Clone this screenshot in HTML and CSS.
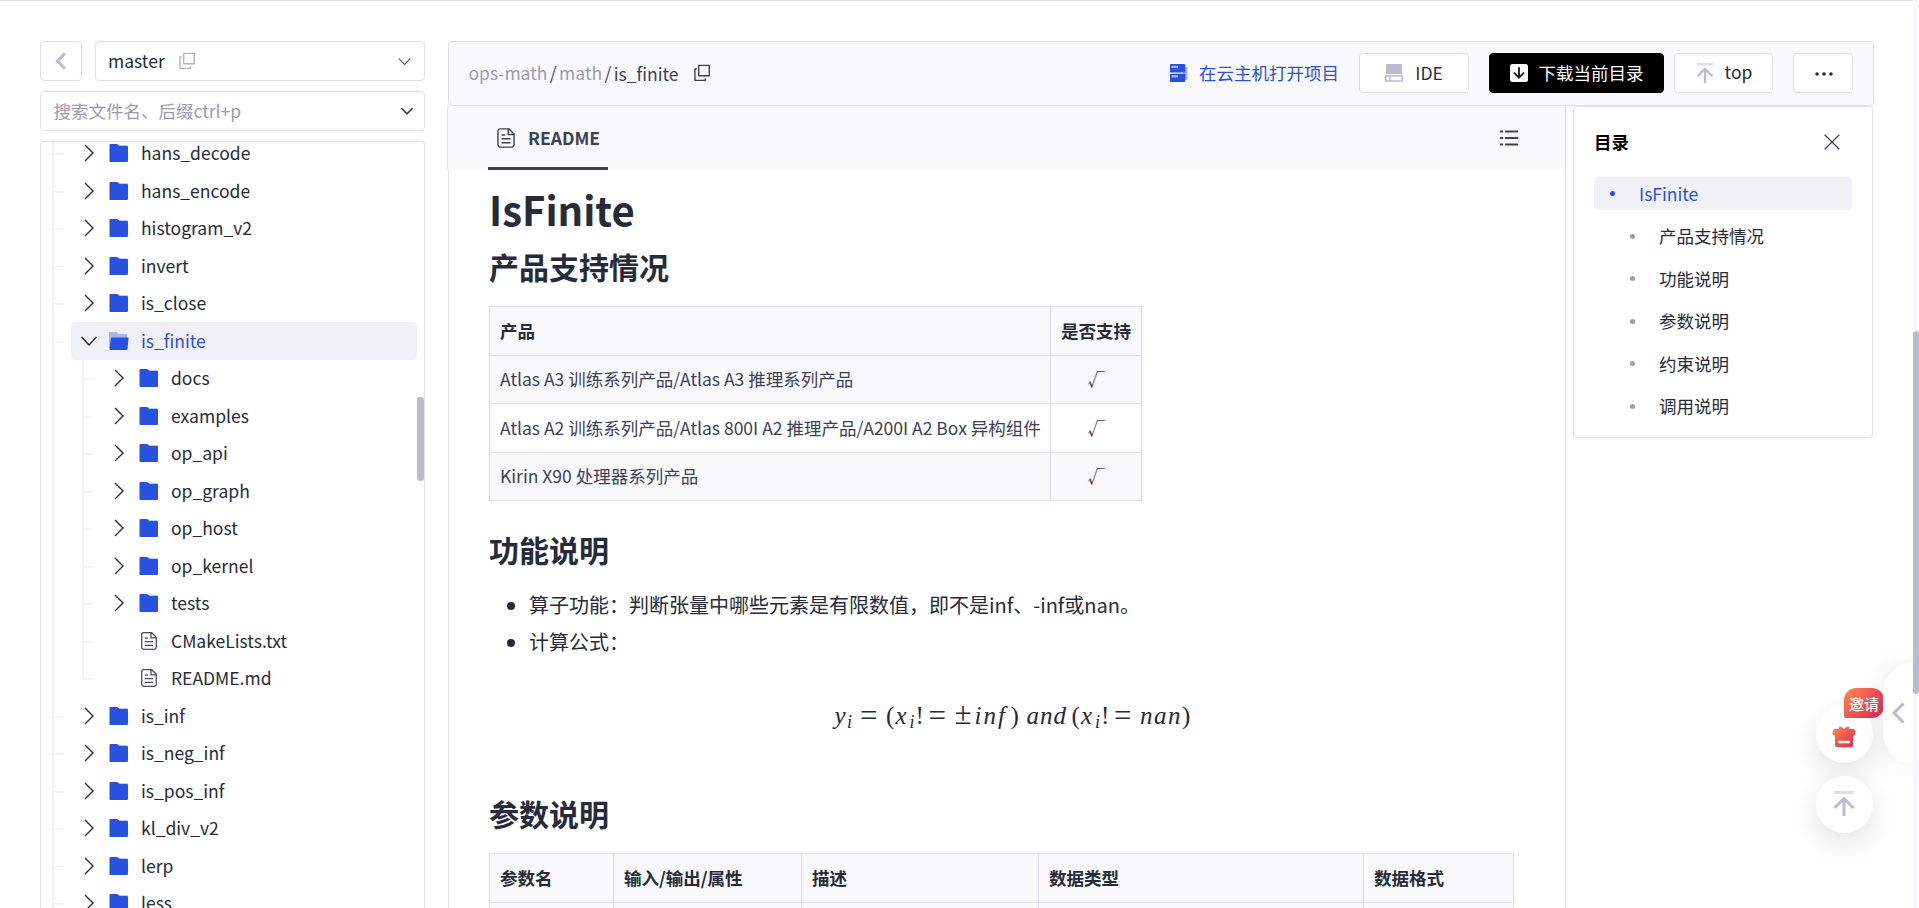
FILE: index.html
```html
<!DOCTYPE html>
<html lang="zh-CN">
<head>
    <meta charset="UTF-8">
    <meta name="viewport" content="width=device-width, initial-scale=1.0">
    <title>is_finite</title>
    <link rel="stylesheet" href="styles.css">
</head>
<body onload="init()">
    <svg width="0" height="0" class="symbols">
        <symbol id="right" viewBox="0 0 20 20"><path d="M6 2l8 8-8 8" fill="none" stroke="currentColor" stroke-width="1.4"/></symbol>
        <symbol id="down" viewBox="0 0 20 20"><path d="M2.5 6l7.5 8 7.5-8" fill="none" stroke="currentColor" stroke-width="1.4"/></symbol>
        <symbol id="folder" viewBox="0 0 20 20"><path d="M9 2.2h9a1 1 0 0 1 1 1v4H9z" fill="#a6b5f0"/><path d="M1.5 1h6.8l2.2 2H18a1 1 0 0 1 1 1v14a1 1 0 0 1-1 1H1.5a1 1 0 0 1-1-1V2a1 1 0 0 1 1-1z" fill="#2951e0"/></symbol>
        <symbol id="open" viewBox="0 0 20 20"><path d="M0 2a1 1 0 0 1 1-1h6.5l2 2H17a1 1 0 0 1 1 1v5H3L1 18H0z" fill="#a6b5f0"/><path d="M3 6.6h16.6L18.5 18a1 1 0 0 1-1 1H1.6a1 1 0 0 1-1-1.2L2 7.4a1 1 0 0 1 1-.8z" fill="#2951e0"/></symbol>
        <symbol id="file" viewBox="0 0 20 20"><path d="M4.7 1.7h8l4.6 4.6V16a2.3 2.3 0 0 1-2.3 2.3H5A2.3 2.3 0 0 1 2.7 16V3.7a2 2 0 0 1 2-2zM12 1.7v5.1h5.3M6 7.2h3M6 10.7h8M6 14.3h8" fill="none" stroke="currentColor" stroke-width="1.3"/></symbol>
        <symbol id="copy" viewBox="0 0 20 20"><path d="M6.7 2.4h10.6v10.3H6.7zM4.7 6H2.9v11.4h10.4v-2.2" fill="none" stroke="currentColor" stroke-width="1.4" stroke-linejoin="round"/></symbol>
        <symbol id="totop" viewBox="0 0 20 20"><path d="M2 1.2h16" stroke="#dddce8" stroke-width="2.4"/><path d="M10 20V6M2.5 13.2L10 5.8l7.5 7.4" fill="none" stroke="#bbbad0" stroke-width="2.3"/></symbol>
    </svg>

    <div class="page">
        <div class="sidebar">
            <div class="branch-row">
                <div class="box back"><svg width="20" height="20" viewBox="0 0 20 20"><path d="M14 2.2L6.4 10l7.6 7.8" fill="none" stroke="#bbbad0" stroke-width="3"/></svg></div>
                <div class="box branch">
                    <span>master</span>
                    <svg class="copy" width="20" height="20"><use href="#copy"/></svg>
                    <svg class="arrow" width="15" height="15"><use href="#down"/></svg>
                </div>
            </div>
            <div class="box search">
                <span>搜索文件名、后缀ctrl+p</span>
                <svg class="arrow" width="14" height="14" viewBox="0 0 20 20"><path d="M2 6l8 8 8-8" fill="none" stroke="#333a4d" stroke-width="2.2"/></svg>
            </div>
            <div class="tree">
                <div class="tree-list" id="tree"></div>
                <div class="tree-thumb"></div>
            </div>
        </div>

        <div class="main">
            <div class="toolbar">
                <div class="crumbs">
                    <span class="muted">ops-math</span><span class="slash">/</span><span class="muted">math</span><span class="slash">/</span><span class="current">is_finite</span>
                    <svg width="20" height="20"><use href="#copy"/></svg>
                </div>
                <div class="cloud">
                    <svg width="18" height="18" viewBox="0 0 18 18"><path d="M13 3h3.5a1 1 0 0 1 1 1v11a1 1 0 0 1-1 1H13z" fill="#a6b5f0"/><path d="M1 0h13a1.3 1.3 0 0 1 1.3 1.3V8.6H0V1a1 1 0 0 1 1-1zM0 9.8h15.3v7a1.2 1.2 0 0 1-1.3 1.2H1a1 1 0 0 1-1-1z" fill="#2951e0"/><path d="M1.5 2.8H8M1.5 12.4H8" stroke="#a6b5f0" stroke-width="2.2"/></svg>
                    <span>在云主机打开项目</span>
                </div>
                <div class="btn ide">
                    <svg width="18" height="18" viewBox="0 0 18 18"><rect x="1" y="0" width="16" height="10.3" rx="1" fill="#bbbad0"/><path d="M.8 12h16.4v5H.8zM5 12v5" fill="#fff" stroke="#bbbad0" stroke-width="1.5"/></svg>
                    <span>IDE</span>
                </div>
                <div class="btn download">
                    <svg width="18" height="18" viewBox="0 0 18 18"><rect width="18" height="18" rx="2.5" fill="#fff"/><path d="M9 3.2v10M4 8.7l5 5 5-5" fill="none" stroke="#222" stroke-width="1.9"/></svg>
                    <span>下载当前目录</span>
                </div>
                <div class="btn top">
                    <svg width="20" height="20"><use href="#totop"/></svg>
                    <span>top</span>
                </div>
                <div class="btn more"><svg width="18" height="6" viewBox="0 0 18 6"><g fill="#252b3a"><circle cx="2" cy="3" r="1.8"/><circle cx="9" cy="3" r="1.8"/><circle cx="16" cy="3" r="1.8"/></g></svg></div>
            </div>

            <div class="content">
                <div class="doc">
                    <div class="tabs">
                        <div class="tab">
                            <svg width="22" height="22"><use href="#file"/></svg>
                            <span>README</span>
                        </div>
                        <svg width="18" height="16" viewBox="0 0 18 16"><path d="M0 1.6h3M5.2 1.6H18M0 8h3M5.2 8H18M0 14.4h3M5.2 14.4H18" stroke="#3c4158" stroke-width="2"/></svg>
                    </div>
                    <div class="markdown">
                        <h1>IsFinite</h1>
                        <h2 class="first">产品支持情况</h2>
                        <table class="support">
                            <thead>
                                <tr><th>产品</th><th class="mark">是否支持</th></tr>
                            </thead>
                            <tbody>
                                <tr><td>Atlas A3 训练系列产品/Atlas A3 推理系列产品</td><td class="mark">√</td></tr>
                                <tr class="even"><td>Atlas A2 训练系列产品/Atlas 800I A2 推理产品/A200I A2 Box 异构组件</td><td class="mark">√</td></tr>
                                <tr><td>Kirin X90 处理器系列产品</td><td class="mark">√</td></tr>
                            </tbody>
                        </table>
                        <h2>功能说明</h2>
                        <ul>
                            <li>算子功能：判断张量中哪些元素是有限数值，即不是inf、-inf或nan。</li>
                            <li>计算公式：</li>
                        </ul>
                        <div class="formula">
                            <i class="y">y</i><sub>i</sub><span class="eq">=</span><span class="paren">(</span><i class="x">x</i><sub>i</sub><span class="bang">!</span><span class="eq2">=</span><span class="pm">±</span><i class="inf">inf</i><span class="close">)</span><i class="and">and</i><span class="paren">(</span><i class="x">x</i><sub>i</sub><span class="bang">!</span><span class="eq2">=</span><i class="nan">nan</i><span class="paren">)</span>
                        </div>
                        <h2 class="last-title">参数说明</h2>
                        <table class="params">
                            <thead>
                                <tr><th class="c1">参数名</th><th class="c2">输入/输出/属性</th><th class="c3">描述</th><th class="c4">数据类型</th><th class="c5">数据格式</th></tr>
                            </thead>
                            <tbody>
                                <tr><td></td><td></td><td></td><td></td><td></td></tr>
                            </tbody>
                        </table>
                    </div>
                </div>

                <div class="toc">
                    <div class="toc-head">
                        <b>目录</b>
                        <svg width="16" height="16" viewBox="0 0 16 16"><path d="M.7.7l14.6 14.6M15.3.7L.7 15.3" stroke="#3c4158" stroke-width="1.3"/></svg>
                    </div>
                    <div class="toc-item active">IsFinite</div>
                    <div class="toc-item">产品支持情况</div>
                    <div class="toc-item">功能说明</div>
                    <div class="toc-item">参数说明</div>
                    <div class="toc-item">约束说明</div>
                    <div class="toc-item">调用说明</div>
                </div>
            </div>
        </div>
    </div>

    <div class="float">
        <div class="circle gift">
            <svg width="24" height="22" viewBox="0 0 24 22"><defs><linearGradient id="g" x1="0" y1="0" x2="1" y2="1"><stop offset="0" stop-color="#ff8a52"/><stop offset="1" stop-color="#dc2549"/></linearGradient></defs><path d="M3 3h4V1.5Q7 0 8.7 .5L12 3 15.3.5Q17 0 17 1.5V3h4a2.3 2.3 0 0 1 2.3 2.3v2.2a2.3 2.3 0 0 1-2.3 2.3V19a2.3 2.3 0 0 1-2.3 2.3H5.3A2.3 2.3 0 0 1 3 19V9.8A2.3 2.3 0 0 1 .7 7.5V5.3A2.3 2.3 0 0 1 3 3z" fill="url(#g)"/><path d="M7.5 16h9.5" stroke="#fff" stroke-width="2.5" stroke-linecap="round"/></svg>
            <span class="badge">邀请</span>
        </div>
        <div class="circle up"><svg width="24" height="25" viewBox="0 0 24 25"><path d="M2.5 1.5h19" stroke="#dddce8" stroke-width="3"/><path d="M12 25V7M2.5 17L12 7.5 21.5 17" fill="none" stroke="#bbbad0" stroke-width="3"/></svg></div>
    </div>
    <div class="drawer"><svg width="14" height="22" viewBox="0 0 14 22"><path d="M12.5 1.5L3 11l9.5 9.5" fill="none" stroke="#bbbad0" stroke-width="3"/></svg></div>
    <div class="scrollbar"><div class="thumb"></div></div>

    <script type="text/javascript">
        var nodes = [
            { name: 'hans_decode' },
            { name: 'hans_encode' },
            { name: 'histogram_v2' },
            { name: 'invert' },
            { name: 'is_close' },
            { name: 'is_finite', open: true },
            { name: 'docs', child: true },
            { name: 'examples', child: true },
            { name: 'op_api', child: true },
            { name: 'op_graph', child: true },
            { name: 'op_host', child: true },
            { name: 'op_kernel', child: true },
            { name: 'tests', child: true },
            { name: 'CMakeLists.txt', child: true, file: true },
            { name: 'README.md', child: true, file: true, last: true },
            { name: 'is_inf' },
            { name: 'is_neg_inf' },
            { name: 'is_pos_inf' },
            { name: 'kl_div_v2' },
            { name: 'lerp' },
            { name: 'less' }
        ]

        function init() {
            var html = ''
            for (var item of nodes) {
                var guides = '<span class="guide' + (item.child ? '' : ' tick') + '"></span>'
                if (item.child) {
                    guides += '<span class="guide inner tick' + (item.last ? ' last' : '') + '"></span>'
                }
                var arrow = item.file ? '' : `<svg width="20" height="20"><use href="#${item.open ? 'down' : 'right'}"/></svg>`
                var icon = item.file ? 'file' : (item.open ? 'open' : 'folder')
                html += `<div class="row">${guides}
                    <div class="node ${item.open ? 'selected' : ''}">
                        <span class="toggle">${arrow}</span>
                        <svg class="icon" width="20" height="20"><use href="#${icon}"/></svg>
                        <span>${item.name}</span>
                    </div>
                </div>`
            }
            document.getElementById('tree').innerHTML = html
        }
    </script>
</body>
</html>
```
FILE: styles.css
```css
* {
	box-sizing: border-box;
}

body {
	margin: 0;
	height: 908px;
	overflow: hidden;
	border-top: 1px solid #dfdfe1;
	background-color: white;
	color: #252b3a;
	font-family: "Noto Sans CJK SC", sans-serif;
	font-size: 17.5px;
	line-height: 26px;
}

svg {
	display: block;
	flex: none;
}

.symbols {
	position: absolute;
}

.page {
	display: flex;
	height: 907px;
	padding: 40px 45px 0 40px;
}

.box {
	display: flex;
	align-items: center;
	height: 40px;
	border: 1px solid #dfdfea;
	border-radius: 4px;
}

/* sidebar */
.sidebar {
	display: flex;
	flex-direction: column;
	gap: 10px;
	width: 385px;
	margin-right: 23px;
}

.branch-row {
	display: flex;
	gap: 13px;
}

.back {
	width: 42px;
	justify-content: center;
}

.branch {
	flex: 1;
	padding: 0 12px;
}

.branch .copy {
	margin-left: 12px;
	color: #b4b3c6;
}

.arrow {
	margin-left: auto;
	color: #333a4d;
}

.search {
	padding: 0 10px 0 12.5px;
	color: #9b9ab4;
}

.tree {
	position: relative;
	flex: 1;
	overflow: hidden;
	border: 1px solid #dfdfea;
	border-bottom: none;
	border-radius: 4px 4px 0 0;
}

.tree-list {
	margin-top: -7.5px;
	padding-left: 11px;
	padding-right: 7px;
}

.tree-thumb {
	position: absolute;
	top: 255px;
	right: 0;
	width: 7px;
	height: 84px;
	border-radius: 3px;
	background-color: #bbbad0;
}

.row {
	display: flex;
	height: 37.5px;
}

.guide {
	width: 12px;
	border-left: 2px solid #f1f1f7;
	margin-right: 7px;
}

.inner {
	margin-left: 11px;
}

.tick {
	background: linear-gradient(#f1f1f7, #f1f1f7) no-repeat 0 18.5px / 100% 1.5px;
}

.last {
	height: 20px;
}

.node {
	flex: 1;
	display: flex;
	align-items: center;
	border-radius: 4px;
	padding-left: 8px;
}

.node .icon {
	margin-left: 10px;
	margin-right: 12px;
	color: #4a4e61;
}

.toggle {
	width: 20px;
}

.selected {
	background-color: #f0f1f7;
	color: #2951e0;
}

.toggle svg {
	color: #252b3a;
}

/* toolbar */
.main {
	flex: 1;
	display: flex;
	flex-direction: column;
}

.toolbar {
	display: flex;
	align-items: center;
	height: 65px;
	border: 1px solid #dfdfea;
	border-radius: 4px;
	background-color: #f9f9fc;
	padding: 0 20px 1px 19.5px;
}

.crumbs {
	display: flex;
	align-items: center;
	color: #3c4158;
}

.crumbs .muted {
	color: #9b9ab4;
}

.crumbs .slash {
	margin: 0 2.4px;
}

.crumbs .current {
	padding-top: 1px;
}

.crumbs svg {
	margin-left: 13.5px;
}

.cloud {
	display: flex;
	align-items: center;
	gap: 11px;
	margin-left: auto;
	margin-right: 20px;
	color: #2951e0;
}

.btn {
	display: flex;
	align-items: center;
	justify-content: center;
	gap: 12px;
	height: 40px;
	border: 1px solid #dfdfea;
	border-radius: 4px;
	background-color: white;
}

.ide {
	width: 110px;
	margin-right: 20px;
}

.download {
	width: 175px;
	margin-right: 10px;
	border-color: black;
	background-color: black;
	color: white;
	gap: 11px;
}

.top {
	width: 99px;
	margin-right: 20px;
	gap: 10px;
}

.top span {
	padding-bottom: 2px;
}

.more {
	width: 60px;
	padding-left: 1px;
	padding-top: 2px;
}

/* readme */
.content {
	flex: 1;
	display: flex;
	align-items: flex-start;
}

.doc {
	width: 1118px;
	height: 802px;
	border-left: 1px solid #dfdfea;
	border-right: 1px solid #dfdfea;
}

.tabs {
	display: flex;
	align-items: center;
	justify-content: space-between;
	height: 64px;
	margin-left: -2px;
	border-left: 1px solid #dfdfea;
	border-top-left-radius: 4px;
	background-color: #f9f9fc;
	padding: 0 47px 0 40px;
}

.tab {
	display: flex;
	align-items: center;
	gap: 11px;
	width: 120px;
	height: 63px;
	border-bottom: 3px solid #3c4158;
	padding: 3px 0 0 7px;
	color: #3c4158;
	font-weight: bold;
}

.markdown {
	height: 738px;
	overflow: hidden;
	padding: 13px 50px 0 40px;
}

h1 {
	margin: 0;
	font-size: 40px;
	line-height: 52px;
}

h2 {
	margin: 28px 0 17px;
	font-size: 30px;
	line-height: 40px;
}

h2.first {
	margin: 11px 0 20px;
}

h2.last-title {
	margin-bottom: 20px;
}

table {
	border-collapse: collapse;
	table-layout: fixed;
	color: #3c4158;
}

th, td {
	height: 48.5px;
	border: 1px solid #dfdfea;
	background-color: #f9f9fc;
	padding: 0 10px;
	text-align: left;
	white-space: nowrap;
}

th {
	color: #252b3a;
}

.even td {
	background-color: white;
}

.support {
	width: 653px;
}

.mark {
	width: 91px;
	text-align: center;
}

ul {
	margin: 0;
	padding-left: 40px;
	font-size: 20px;
	line-height: 37px;
}

.formula {
	display: flex;
	justify-content: center;
	align-items: baseline;
	height: 37px;
	margin: 35px 0 61px;
	padding-left: 22px;
	font-family: "Liberation Serif", serif;
	font-size: 25px;
	line-height: 37px;
}

.formula span, .formula i {
	white-space: nowrap;
}

.formula sub {
	width: 6px;
	font-size: 18px;
	font-style: italic;
	line-height: 1;
	vertical-align: baseline;
	transform: translateY(4px);
}

.y {
	width: 12.5px;
}

.x {
	width: 14px;
}

.eq, .eq2, .pm {
	font-size: 31px;
}

.eq, .eq2 {
	transform: translateY(2px);
}

.eq {
	width: 33px;
	padding-left: 7px;
}

.eq2 {
	width: 27px;
	padding-left: 1px;
}

.bang {
	width: 12px;
}

.paren {
	width: 9.5px;
}

.pm {
	width: 20px;
}

.inf {
	width: 36px;
	letter-spacing: 2px;
}

.close {
	width: 16px;
}

.and {
	width: 45px;
	letter-spacing: 1px;
}

.nan {
	width: 42px;
	letter-spacing: 1.5px;
}

.c1 { width: 124px; }
.c2 { width: 188px; }
.c3 { width: 237px; }
.c4 { width: 325px; }
.c5 { width: 150px; }

/* table of contents */
.toc {
	width: 300px;
	height: 332px;
	margin-left: 7px;
	border: 1px solid #dfdfea;
	border-radius: 4px;
	background-color: white;
	padding: 20px;
}

.toc-head {
	display: flex;
	align-items: center;
	justify-content: space-between;
	height: 30px;
	margin-bottom: 20px;
	padding-right: 12px;
	color: black;
}

.toc-item {
	display: flex;
	align-items: center;
	height: 33px;
	margin-bottom: 9.5px;
	padding-left: 36px;
	border-radius: 4px;
}

.toc-item::before {
	content: "";
	width: 5px;
	height: 5px;
	margin-right: 24px;
	border-radius: 50%;
	background-color: #9b9ab4;
}

.toc-item.active {
	background-color: #f0f1f7;
	color: #2951e0;
	padding-left: 16px;
}

.toc-item.active::before {
	background-color: #2951e0;
}

/* floating buttons */
.float {
	position: absolute;
	left: 1816px;
	top: 706px;
}

.circle {
	position: relative;
	display: flex;
	align-items: center;
	justify-content: center;
	width: 57px;
	height: 57px;
	margin-bottom: 13px;
	border-radius: 50%;
	background-color: white;
	box-shadow: 0 10px 30px rgba(0, 0, 0, 0.12);
}

.gift {
	padding-top: 4px;
	padding-right: 1px;
}

.up {
	padding-bottom: 3px;
	padding-right: 1px;
}

.badge {
	position: absolute;
	left: 28px;
	top: -18px;
	width: 40px;
	height: 30px;
	border-radius: 12px 12px 12px 2px;
	background: linear-gradient(135deg, #ff8a52, #dc2558);
	color: white;
	font-size: 15px;
	font-weight: 500;
	line-height: 31px;
	text-align: center;
}

.drawer {
	position: absolute;
	right: 6px;
	top: 663px;
	display: flex;
	align-items: center;
	width: 30px;
	height: 100px;
	border-radius: 30px 0 0 30px;
	background-color: white;
	padding-left: 8px;
	box-shadow: 0 0 30px rgba(0, 0, 0, 0.09);
}

.scrollbar {
	position: absolute;
	right: 0;
	top: 0;
	width: 6px;
	height: 908px;
	background-color: #f9f9fc;
	padding-top: 331px;
}

.thumb {
	height: 363px;
	border-radius: 3px;
	background-color: #bbbad0;
}
```
